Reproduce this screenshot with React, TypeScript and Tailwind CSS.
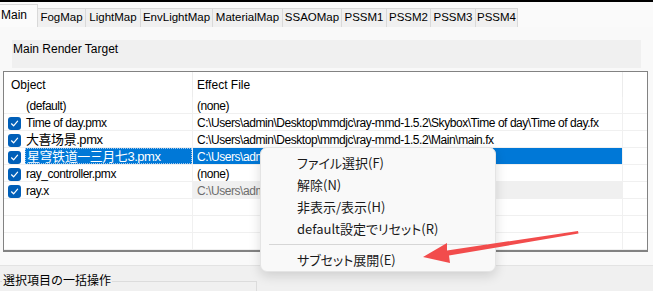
const tabs = [
  { label: "FogMap", w: "w-[48px]" },
  { label: "LightMap", w: "w-[55px]" },
  { label: "EnvLightMap", w: "w-[72px]" },
  { label: "MaterialMap", w: "w-[70px]" },
  { label: "SSAOMap", w: "w-[59px]" },
  { label: "PSSM1", w: "w-[45px]" },
  { label: "PSSM2", w: "w-[44px]" },
  { label: "PSSM3", w: "w-[45px]" },
  { label: "PSSM4", w: "w-[42px]" },
];

type Row = {
  checked?: boolean;
  obj?: string;
  cjk?: boolean;
  eff?: string;
  selected?: boolean;
  disabled?: boolean;
};

// rows under the context menu only show the start of their path
const rows: Row[] = [
  { obj: "(default)", eff: "(none)" },
  {
    checked: true,
    obj: "Time of day.pmx",
    eff: "C:\\Users\\admin\\Desktop\\mmdjc\\ray-mmd-1.5.2\\Skybox\\Time of day\\Time of day.fx",
  },
  {
    checked: true,
    obj: "大喜场景.pmx",
    cjk: true,
    eff: "C:\\Users\\admin\\Desktop\\mmdjc\\ray-mmd-1.5.2\\Main\\main.fx",
  },
  {
    checked: true,
    obj: "星穹铁道一三月七3.pmx",
    cjk: true,
    eff: "C:\\Users\\adm",
    selected: true,
  },
  { checked: true, obj: "ray_controller.pmx", eff: "(none)" },
  {
    checked: true,
    obj: "ray.x",
    eff: "C:\\Users\\adm",
    disabled: true,
  },
  {},
  {},
  {},
];

const menuItems = ["ファイル選択(F)", "解除(N)", "非表示/表示(H)", "default設定でリセット(R)"];

const CheckBox = () => (
  <div className="w-[13px] h-[13px] rounded-[3px] bg-[#005fb8] flex items-center justify-center shrink-0">
    <svg width="9" height="9" viewBox="0 0 9 9" fill="none">
      <path d="M1.5 4.8 L3.6 6.8 L7.6 2.2" stroke="white" strokeWidth="1.2" strokeLinecap="round" strokeLinejoin="round" />
    </svg>
  </div>
);

export default function App() {
  return (
    <div className="relative w-[653px] h-[291px] overflow-hidden bg-[#f9f9f9] flex flex-col font-['Liberation_Sans',sans-serif] text-[#000]">
      <div className="h-[2px] bg-black shrink-0" />

      {/* tab strip */}
      <div className="h-[25px] flex items-end shrink-0 bg-[#fafafa]">
        <div className="w-[38px] h-[23px] bg-[#fbfbfb] border-t border-r border-[#d9d9d9] pl-[1px] pt-[3px] text-[12px] leading-[14px]">
          Main
        </div>
        {tabs.map((t) => (
          <div
            key={t.label}
            className={`${t.w} h-[19px] bg-[#f0f0f0] border-t border-r border-[#d9d9d9] flex items-center justify-center text-[11.5px] leading-none`}
          >
            {t.label}
          </div>
        ))}
      </div>

      {/* page */}
      <div className="flex-1 flex flex-col">
        <div className="mt-[13px] ml-[12px] mr-[12px] h-[28px] bg-[#f0f0f0] pl-[1px] pt-[2px] text-[12px] leading-[15px]">
          Main Render Target
        </div>

        <div className="mt-[3px] ml-[3px] w-[645px] h-[181px] border border-b-2 border-[#828282] bg-white flex flex-col font-['Liberation_Sans','Noto_Sans_CJK_SC',sans-serif] text-[12px] tracking-[-0.45px]">
          <div className="h-[25px] flex shrink-0 tracking-normal">
            <div className="w-[189px] border-r border-[#ececec] pl-[7px] pt-[1px] flex items-center">Object</div>
            <div className="w-[430px] border-r border-[#ececec] pl-[4px] pt-[1px] flex items-center">Effect File</div>
          </div>
          {rows.map((r, i) => (
            <div key={i} className="h-[17px] flex border-b border-[#f0f0f0] shrink-0">
              <div className="w-[189px] border-r border-[#f0f0f0] flex items-center">
                <div className="w-[21px] pl-[4px] pt-[2px] shrink-0">{r.checked && <CheckBox />}</div>
                <div
                  className={`flex-1 h-full flex items-center pl-[1px] pt-[2px] whitespace-nowrap overflow-hidden ${
                    r.selected ? "bg-[#0078d7] text-white border border-dotted border-[#9fc7ef]" : ""
                  } ${r.cjk ? "text-[13px]" : ""}`}
                >
                  {r.obj}
                </div>
              </div>
              <div
                className={`w-[430px] border-r border-[#f0f0f0] pl-[4px] pt-[2px] flex items-center whitespace-nowrap overflow-hidden ${
                  r.selected ? "bg-[#0078d7] text-white" : ""
                } ${r.disabled ? "bg-[#f0f0f0] text-[#6d6d6d]" : ""}`}
              >
                {r.eff}
              </div>
            </div>
          ))}
        </div>

        <div className="h-[13px] shrink-0" />
        <div className="flex-1 bg-[#f0f0f0] border-t border-[#e3e3e3] relative">
          <div className="absolute left-0 top-[15px] w-[257px] h-[20px] border-t border-r border-[#dcdcdc]" />
          <div className="relative ml-[2px] mt-[6px] inline-block bg-[#f0f0f0] px-[1px] text-[12px] leading-[15px] font-['Noto_Sans_CJK_JP',sans-serif]">
            選択項目の一括操作
          </div>
        </div>
      </div>

      {/* context menu */}
      <div className="absolute left-[260px] top-[147px] w-[236px] h-[125px] rounded-[7px] bg-[#f9f9f9] border border-[#e4e4e4] shadow-[0_4px_12px_rgba(0,0,0,0.14)] pt-[4px] flex flex-col font-['Noto_Sans_CJK_JP',sans-serif] text-[13px] [font-feature-settings:'palt'] text-[#1a1a1a]">
        {menuItems.map((m) => (
          <div key={m} className="h-[22px] flex items-center pl-[36px] shrink-0">
            {m}
          </div>
        ))}
        <div className="mx-[8px] my-[4px] h-px bg-[#d6d6d6] shrink-0" />
        <div className="h-[22px] flex items-center pl-[36px] shrink-0">サブセット展開(E)</div>
      </div>

      {/* red arrow */}
      <svg className="absolute left-0 top-0" width="653" height="291" viewBox="0 0 653 291">
        <polygon
          points="423,257 447,243 447,250.5 578,231 578.5,233.5 449,255.5 450,263"
          fill="#f24c4c"
        />
      </svg>
    </div>
  );
}
